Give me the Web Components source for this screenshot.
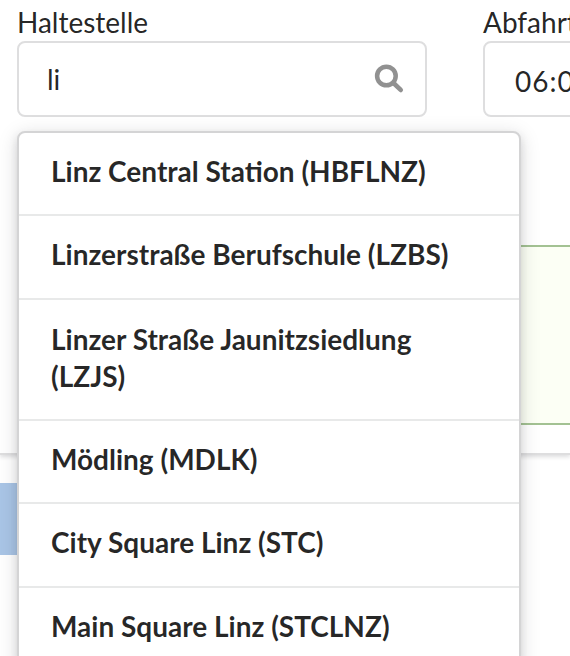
<!DOCTYPE html>
<html lang="de">
<head>
<meta charset="utf-8">
<title>Haltestelle</title>
<style>
  html, body { margin: 0; height: 656px; overflow: hidden; background: #fff; }
  body { font: 28px/36px Lato, sans-serif; color: rgba(0,0,0,.87); }
</style>
</head>
<body>
<stop-page></stop-page>
<script>
class StopPage extends HTMLElement {
  constructor() {
    super();
    this.attachShadow({ mode: 'open' }).innerHTML = `
      <style>
        :host { display: block; width: 570px; height: 656px; overflow: hidden; }
        .segment { box-sizing: border-box; height: 455px; padding: 4px 0 0 17px;
          border-bottom: 2px solid rgba(34,36,38,.15); box-shadow: 0 2px 4px rgba(34,36,38,.15); }
        .fields { display: grid; grid-template-columns: 410px 410px; column-gap: 56px; }
        .message { box-sizing: border-box; height: 180px; margin-top: 128px;
          border: solid #a3c293; border-width: 2px 0; background: #fcfff5; }
        .bar { height: 72px; width: 300px; margin-top: 28px; background: #a9c5e6; }
        result-item:nth-child(3n + 2) { --pad-bottom: 25px; }
        result-item:nth-child(3) { --pad-top: 21px; }
      </style>
      <div class="segment">
        <div class="fields">
          <form-field label="Haltestelle">
            <search-input value="li">
              <result-item>Linz Central Station (HBFLNZ)</result-item>
              <result-item>Linzerstraße Berufschule (LZBS)</result-item>
              <result-item>Linzer Straße Jaunitzsiedlung (LZJS)</result-item>
              <result-item>Mödling (MDLK)</result-item>
              <result-item>City Square Linz (STC)</result-item>
              <result-item>Main Square Linz (STCLNZ)</result-item>
            </search-input>
          </form-field>
          <form-field label="Abfahrt"><time-input>06:00</time-input></form-field>
        </div>
        <div class="message"></div>
      </div>
      <div class="bar"></div>`;
  }
}

class FormField extends HTMLElement {
  constructor() {
    super();
    this.attachShadow({ mode: 'open' }).innerHTML = `
      <style>
        :host { display: block; }
        .label { height: 37px; line-height: 36px; white-space: nowrap; }
      </style>
      <div class="label"></div><slot></slot>`;
  }
  connectedCallback() {
    this.shadowRoot.querySelector('.label').textContent = this.getAttribute('label');
  }
}

const boxStyle = `
  .box { box-sizing: border-box; height: 76px; display: flex; align-items: center;
    border: 2px solid #dededf; border-radius: 8px; background: #fff; }`;

class SearchInput extends HTMLElement {
  constructor() {
    super();
    this.attachShadow({ mode: 'open' }).innerHTML = `
      <style>
        :host { display: block; position: relative; }
        ${boxStyle}
        .box { justify-content: space-between; padding: 0 20px 0 28px; }
        svg { width: 32px; height: 32px; }
        .results { position: absolute; top: 90px; left: 0; z-index: 1; box-sizing: border-box;
          width: 504px; border: 2px solid #d4d4d5; border-radius: 8px; background: #fff;
          box-shadow: 0 4px 8px rgba(34,36,38,.12), 0 4px 20px rgba(34,36,38,.15); }
      </style>
      <div class="box">
        <span></span>
        <svg viewBox="0 0 32 32" fill="none" stroke="#919191">
          <circle cx="13.4" cy="13" r="9.3" stroke-width="4.5"/>
          <path d="M20.2 19.8 27.7 26.9" stroke-width="4.7" stroke-linecap="round"/>
        </svg>
      </div>
      <div class="results"><slot></slot></div>`;
  }
  connectedCallback() {
    this.shadowRoot.querySelector('span').textContent = this.getAttribute('value');
  }
}

class ResultItem extends HTMLElement {
  constructor() {
    super();
    this.attachShadow({ mode: 'open' }).innerHTML = `
      <style>
        :host { display: block; padding: var(--pad-top, 20px) 32px var(--pad-bottom, 24px);
          font-weight: 700; line-height: 37px;
          color: rgba(0,0,0,.85); border-bottom: 2px solid rgba(34,36,38,.1); }
      </style><slot></slot>`;
  }
}

class TimeInput extends HTMLElement {
  constructor() {
    super();
    this.attachShadow({ mode: 'open' }).innerHTML = `
      <style>${boxStyle}
        :host { display: block; }
        .box { padding: 4px 28px 0 30px; letter-spacing: 1px; }
      </style>
      <div class="box"><slot></slot></div>`;
  }
}

customElements.define('result-item', ResultItem);
customElements.define('search-input', SearchInput);
customElements.define('time-input', TimeInput);
customElements.define('form-field', FormField);
customElements.define('stop-page', StopPage);
</script>
</body>
</html>
